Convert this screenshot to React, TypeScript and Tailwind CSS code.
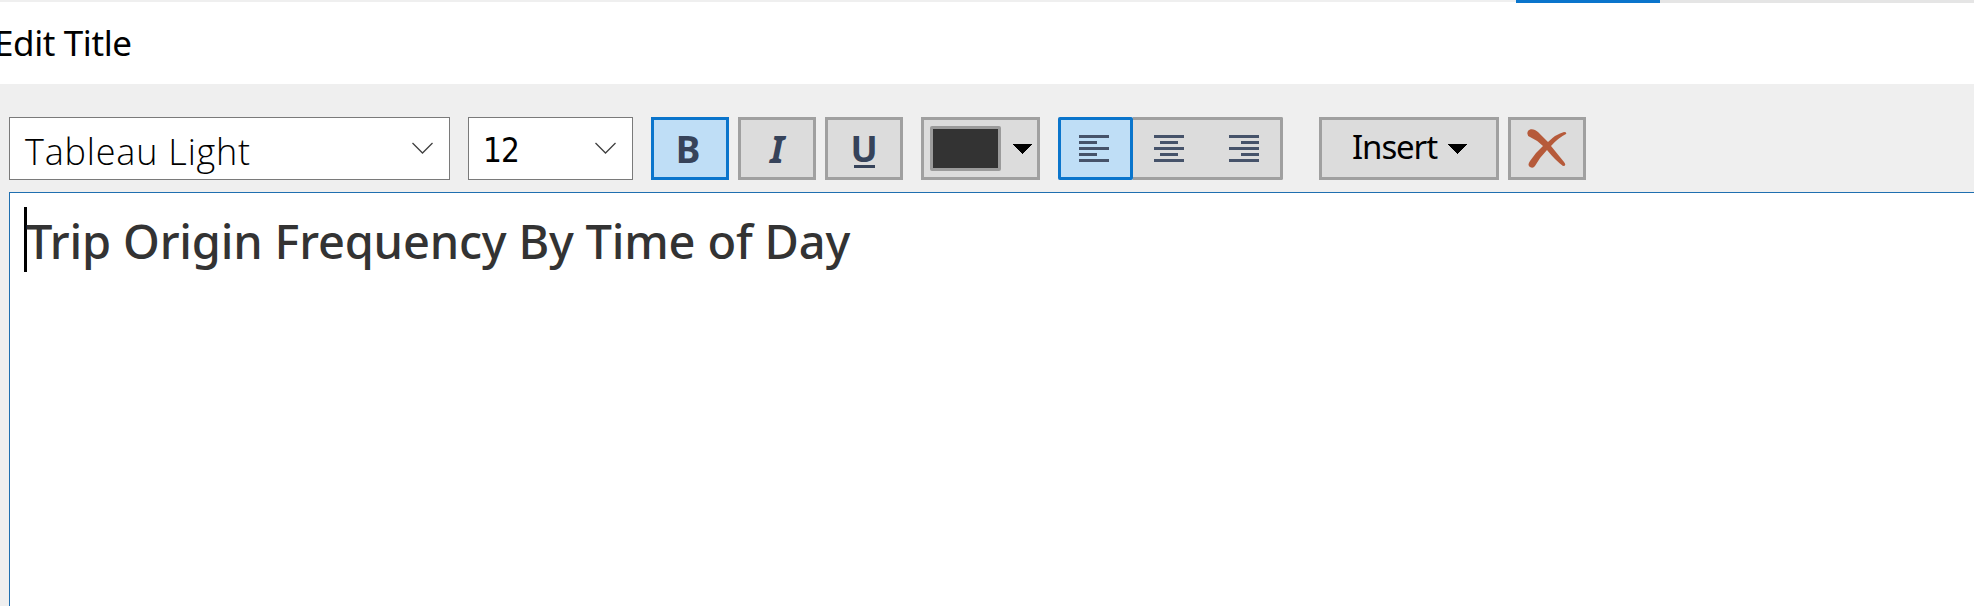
import React from "react";

const Chevron = () => (
  <svg width="23" height="13" viewBox="0 0 23 13" fill="none" stroke="#404040" strokeWidth="1.3">
    <path d="M1.5 1 L11.5 11 L21.5 1" />
  </svg>
);

const Caret = () => (
  <svg width="19" height="10" viewBox="0 0 19 10" shapeRendering="crispEdges">
    <path d="M0 0 H19 L9.5 10 Z" fill="#000" />
  </svg>
);

const LINES = {
  left: [0, 0],
  center: [6, 6],
  right: [12, 12],
};

function AlignIcon({ kind }: { kind: keyof typeof LINES }) {
  const [a, b] = LINES[kind];
  return (
    <svg width="30" height="27" viewBox="0 0 30 27" fill="#46536a" shapeRendering="crispEdges">
      <rect x="0" y="0" width="30" height="3" />
      <rect x={a} y="6" width="18" height="3" />
      <rect x="0" y="12" width="30" height="3" />
      <rect x={b} y="18" width="18" height="3" />
      <rect x="0" y="24" width="30" height="3" />
    </svg>
  );
}

const button = "flex h-[63px] items-center border-[3px] border-[#a0a0a0] bg-[#dcdcdc]";

export default function App() {
  return (
    <div className="flex h-[606px] w-[1974px] flex-col overflow-hidden bg-[#efefef] font-['Noto_Sans','Liberation_Sans',sans-serif] text-black">
      <div className="flex h-[84px] flex-col bg-white">
        <div className="flex h-[3px] items-start">
          <div className="h-[2px] w-[1516px] bg-[#efefef]" />
          <div className="h-[3px] w-[144px] bg-[#0a75cc]" />
          <div className="h-[3px] flex-1 bg-[#e5e5e5]" />
        </div>
        <div className="-ml-[6px] pt-[14px] text-[35px] leading-[52px] whitespace-nowrap">
          <span className="tracking-[-0.4px]">Edit Title</span>
        </div>
      </div>

      <div className="flex h-[108px] items-start pt-[33px] pl-[9px]">
        <div className="flex h-[63px] w-[441px] items-center justify-between border border-[#7a7a7a] bg-white pr-[15px] pl-[15px]">
          <span className="pt-[7px] font-['Open_Sans','Noto_Sans',sans-serif] text-[36px] leading-[48px] font-light tracking-[0.8px] whitespace-nowrap">
            Tableau Light
          </span>
          <Chevron />
        </div>
        <div className="ml-[18px] flex h-[63px] w-[165px] items-center justify-between border border-[#7a7a7a] bg-white pr-[15px] pl-[14px]">
          <span className="pt-[4px] font-['DejaVu_Sans_Condensed','DejaVu_Sans',sans-serif] text-[33px] leading-[44px] tracking-[-1px]">12</span>
          <Chevron />
        </div>

        <button className="ml-[18px] flex h-[63px] w-[78px] items-center justify-center border-[3px] border-[#0a75cc] bg-[#bfdef6] pr-[4px] text-[37px] leading-[50px] font-bold text-[#36435a]">
          B
        </button>
        <button className={`${button} ml-[9px] w-[78px] justify-center text-[37px] leading-[50px] font-bold text-[#36435a] italic`}>
          I
        </button>
        <button className={`${button} ml-[9px] w-[78px] flex-col justify-start text-[#36435a]`}>
          <span className="h-[45px] text-[36px] leading-[57px] font-bold">U</span>
          <span className="h-[3px] w-[21px] bg-[#36435a]" />
        </button>

        <button className={`${button} ml-[18px] w-[119px] pl-[6px]`}>
          <span className="h-[45px] w-[71px] rounded-[2px] border-[3px] border-[#9b9b9b] bg-[#333333]" />
          <span className="ml-[12px]"><Caret /></span>
        </button>

        <div className="ml-[18px] flex h-[63px] w-[225px] rounded-[2px] bg-[#dcdcdc]">
          <button className="flex w-[75px] items-center rounded-[2px] border-[3px] border-[#0a75cc] bg-[#bfdef6] pl-[18px]">
            <AlignIcon kind="left" />
          </button>
          <div className="flex w-[150px] items-center gap-[45px] rounded-r-[2px] border-[3px] border-l-0 border-[#a0a0a0] pl-[21px]">
            <AlignIcon kind="center" />
            <AlignIcon kind="right" />
          </div>
        </div>

        <button className={`${button} ml-[36px] w-[180px] justify-between pr-[29px] pl-[30px]`}>
          <span className="pb-[3px] text-[33px] leading-[44px] tracking-[-1.1px]">Insert</span>
          <Caret />
        </button>
        <button className={`${button} ml-[9px] w-[78px] justify-center`}>
          <svg width="40" height="40" viewBox="0 0 40 40" fill="#b65a3a">
            <path d="M1 2 C3 -1 8 0 11 3 L21 13 Q29 5 37 3 Q40 3 39 5 Q31 9 24 17 L37 33 Q40 37 36 37 Q28 31 20 21 Q13 28 8 37 Q6 40 3 38 Q0 36 3 32 Q9 23 16 17 Q10 11 3 8 Q-1 6 1 2 Z" />
          </svg>
        </button>
      </div>

      <div className="ml-[9px] flex flex-1 items-start border-t border-l border-[#1f6fb0] bg-white pt-[14px] pl-[14px]">
        <span className="h-[65px] w-[3px] bg-black" />
        <span className="-ml-[1px] pt-[2px] text-[47px] leading-[64px] font-medium tracking-[-0.2px] whitespace-nowrap text-[#333333]">
          Trip Origin Frequency By Time of Day
        </span>
      </div>
    </div>
  );
}
